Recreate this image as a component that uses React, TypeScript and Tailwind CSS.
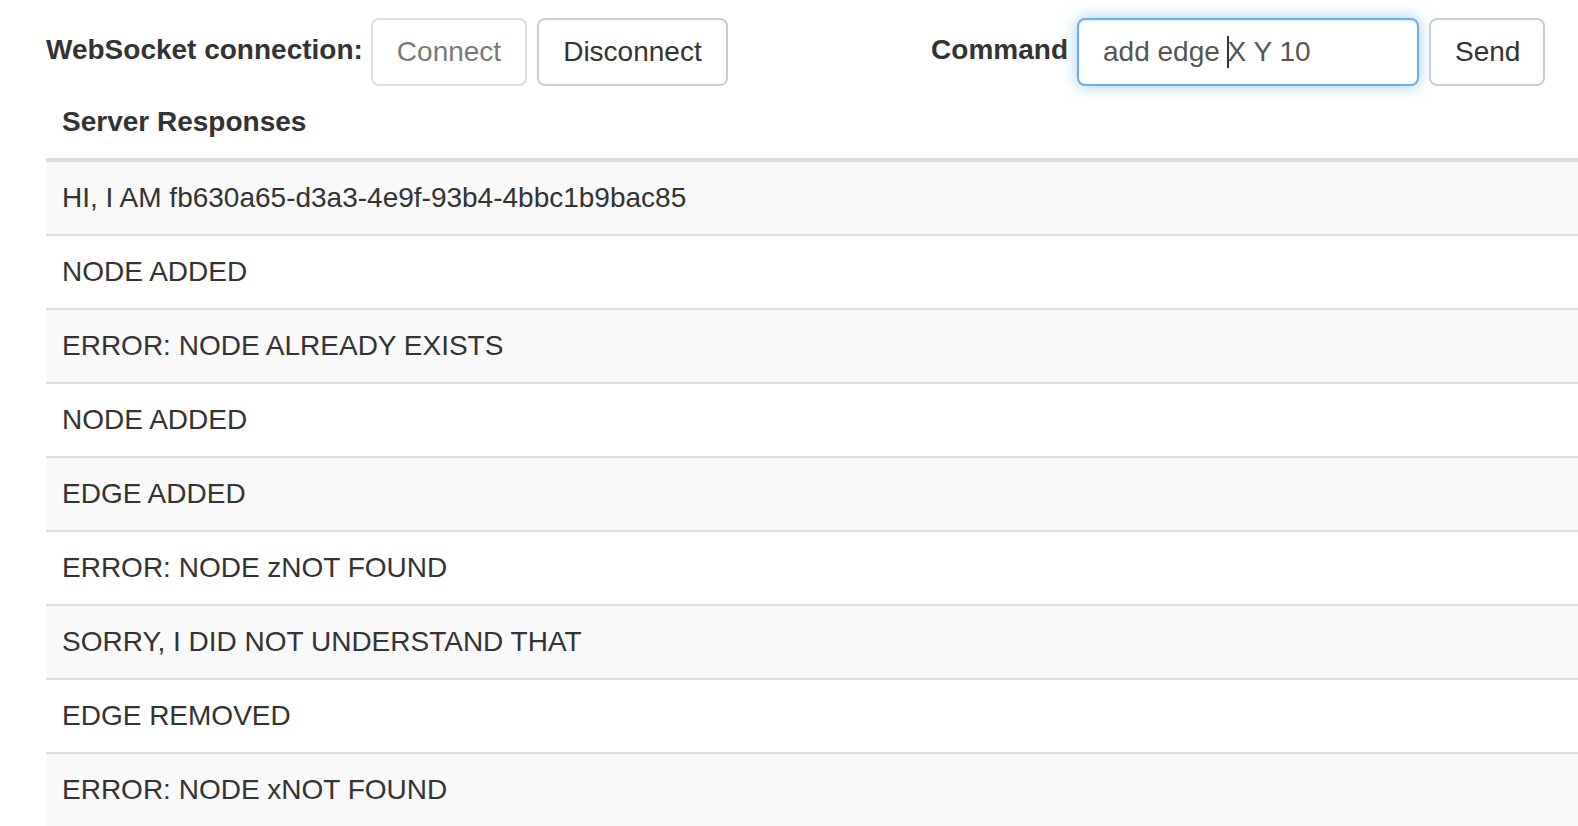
const responses = [
  "HI, I AM fb630a65-d3a3-4e9f-93b4-4bbc1b9bac85",
  "NODE ADDED",
  "ERROR: NODE ALREADY EXISTS",
  "NODE ADDED",
  "EDGE ADDED",
  "ERROR: NODE zNOT FOUND",
  "SORRY, I DID NOT UNDERSTAND THAT",
  "EDGE REMOVED",
  "ERROR: NODE xNOT FOUND",
];

const btn =
  "h-[68px] px-[24px] border-[2px] border-[#ccc] rounded-[8px] bg-white text-[28px] leading-[40px] text-[#333]";

const App = () => {
  return (
    <div className="w-[1578px] h-[826px] overflow-hidden bg-white pl-[46px] pt-[18px] font-['Liberation_Sans',Arial,sans-serif] text-[#333]">
      {/* controls */}
      <div className="flex justify-between items-center pr-[33px] h-[68px]">
        <div className="flex items-center">
          <label className="font-bold text-[28px] leading-[40px] mb-[4px]">
            WebSocket connection:
          </label>
          <button type="button" disabled className={`${btn} ml-[8px] opacity-65`}>
            Connect
          </button>
          <button type="button" className={`${btn} ml-[10px]`}>
            Disconnect
          </button>
        </div>
        <div className="flex items-center">
          <label className="font-bold text-[28px] leading-[40px] mb-[4px]">Command</label>
          <div className="ml-[9px] w-[342px] h-[68px] px-[24px] flex items-center border-[2px] border-[#66afe9] rounded-[8px] text-[28px] text-[#555] shadow-[inset_0_2px_2px_rgba(0,0,0,0.075),0_0_16px_rgba(102,175,233,0.6)] whitespace-pre">
            add edge <span className="inline-block w-[2px] h-[32px] bg-[#333] -ml-[1px] -mr-[1px]" />X Y 10
          </div>
          <button type="button" className={`${btn} ml-[10px] w-[116px] px-0`}>
            Send
          </button>
        </div>
      </div>

      {/* responses table */}
      <table className="w-full border-collapse text-[28px] leading-[40px]">
        <thead>
          <tr>
            <th className="text-left align-bottom p-[16px] border-b-[4px] border-[#ddd] font-bold">
              Server Responses
            </th>
          </tr>
        </thead>
        <tbody>
          {responses.map((r, i) => (
            <tr key={i} className={i % 2 === 0 ? "bg-[#f9f9f9]" : "bg-white"}>
              <td className={`p-[16px] border-[#ddd] ${i === 0 ? "" : "border-t-[2px]"}`}>{r}</td>
            </tr>
          ))}
        </tbody>
      </table>
    </div>
  );
};

export default App;
